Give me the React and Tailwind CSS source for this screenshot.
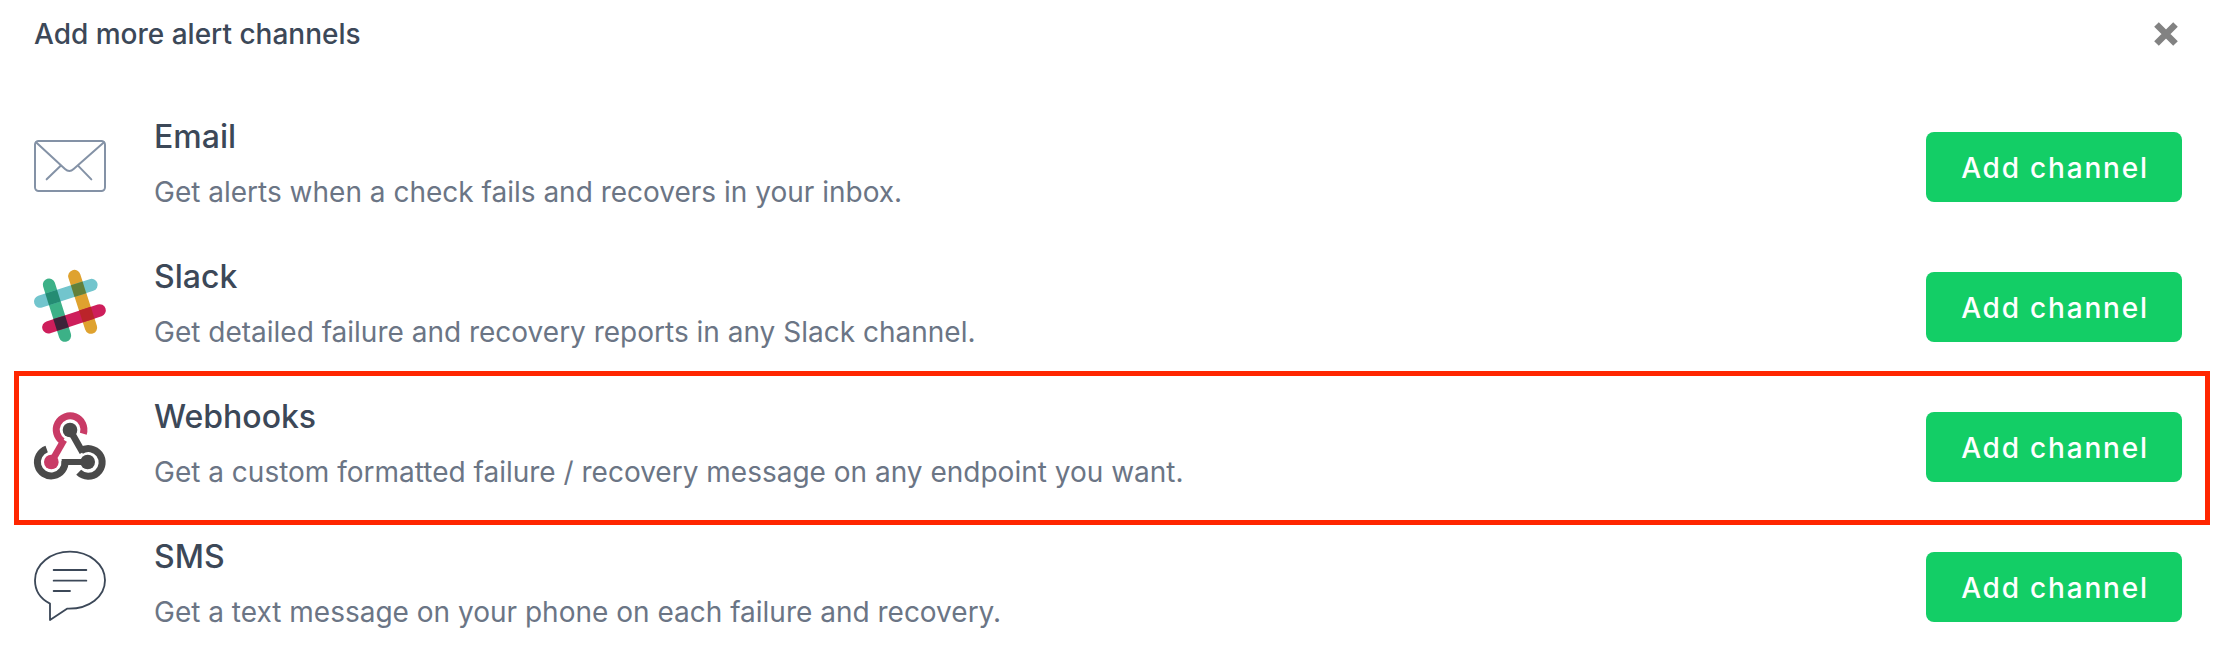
function EmailIcon() {
  return (
    <svg viewBox="42 33 216 216" className="size-[72px] overflow-visible" fill="none" stroke="#8492a6" strokeWidth="6" strokeLinecap="round" strokeLinejoin="round">
      <rect x="45" y="63" width="210" height="150" rx="11" />
      <path d="M48 67L135 147Q148 159 161 147L252 67M122 137L80 178M174 137L214 178" />
    </svg>
  );
}

function SlackIcon() {
  return (
    <svg viewBox="42 33 216 216" className="size-[72px] overflow-visible" fill="none" strokeWidth="37">
      <g strokeLinecap="round">
        <path d="M163 48L213 203" stroke="#dfa22f" />
        <path d="M87 74L135 227" stroke="#3cb187" />
        <path d="M85 202L239 151" stroke="#ce1e5b" />
        <path d="M60.500 125L214.500 75" stroke="#72c5cd" />
      </g>
      <path d="M93.500 94.800L104.500 130" stroke="#248c73" />
      <path d="M170.200 70L181.200 105.300" stroke="#62803a" />
      <path d="M117.700 171.700L128.700 207" stroke="#3d2339" />
      <path d="M194.900 146.100L205.900 181.500" stroke="#bb242a" />
    </svg>
  );
}

function WebhooksIcon() {
  return (
    <svg viewBox="42 33 216 216" className="size-[72px] overflow-visible" fill="none">
      <g stroke="#4a4a4a" strokeWidth="21">
        <path d="M80 147A41.500 41.500 0 1 0 135 182" />
        <path d="M183 152A41.500 41.500 0 1 1 176 217" />
        <path d="M150 90L188 157" strokeWidth="20" />
        <path d="M125 186H203" strokeWidth="18" />
      </g>
      <path d="M190 101A41.500 41.500 0 1 0 128 124" stroke="#c93b66" strokeWidth="21" />
      <path d="M132 120L94 186" stroke="#c93b66" strokeWidth="20" />
      <circle cx="150" cy="90" r="22" fill="#4a4a4a" />
      <circle cx="203" cy="186" r="22" fill="#4a4a4a" />
      <circle cx="94" cy="186" r="22" fill="#c93b66" />
    </svg>
  );
}

function SmsIcon() {
  return (
    <svg viewBox="42 33 216 216" className="size-[72px] overflow-visible" fill="none" stroke="#3c4858" strokeWidth="5.500" strokeLinecap="round" strokeLinejoin="round">
      <path d="M90 191C62 177 45 152 45 121C45 73 92 35 150 35S255 73 255 121S209 208 141 206L90 240Z" />
      <path d="M101 90H199M101 122H199M101 153H150" />
    </svg>
  );
}

const channels = [
  { name: "Email", text: "Get alerts when a check fails and recovers in your inbox.", Icon: EmailIcon },
  { name: "Slack", text: "Get detailed failure and recovery reports in any Slack channel.", Icon: SlackIcon },
  {
    name: "Webhooks",
    text: "Get a custom formatted failure / recovery message on any endpoint you want.",
    Icon: WebhooksIcon,
    highlighted: true,
  },
  { name: "SMS", text: "Get a text message on your phone on each failure and recovery.", Icon: SmsIcon },
];

function Channel({ name, text, Icon, highlighted }) {
  return (
    <li className="relative flex h-[140px] items-center">
      <Icon />
      <div className="ml-12 flex-1 pb-2">
        <h2 className="text-[32px] leading-[48px] font-medium text-[#3c4858]">{name}</h2>
        <p className="mt-2.5 text-[28px] leading-[42px] text-[#6b7585]">{text}</p>
      </div>
      <button className="flex h-[70px] w-[256px] items-center justify-center rounded-lg bg-[#13ce66] pt-0.5 pl-0.5 text-[28px] font-medium tracking-[1.8px] text-white">
        Add channel
      </button>
      {highlighted && (
        <div className="pointer-events-none absolute -top-[6px] -right-[28px] -left-[20px] h-[154px] border-5 border-[#ff2600]" />
      )}
    </li>
  );
}

export default function App() {
  return (
    <main className="h-[666px] overflow-hidden bg-white pr-[42px] pl-[34px] font-['Inter',sans-serif]">
      <header className="flex h-[97px] items-start justify-between">
        <h1 className="pt-[13px] text-[28px] leading-[42px] font-medium text-[#3c4858]">Add more alert channels</h1>
        <button aria-label="Close" className="mt-[22px] mr-1">
          <svg viewBox="0 0 24 24" className="size-6" fill="none" stroke="#828282" strokeWidth="6.500">
            <path d="M2.500 2.500L21.500 21.500M21.500 2.500L2.500 21.500" />
          </svg>
        </button>
      </header>
      <ul>
        {channels.map((channel) => (
          <Channel key={channel.name} {...channel} />
        ))}
      </ul>
    </main>
  );
}
